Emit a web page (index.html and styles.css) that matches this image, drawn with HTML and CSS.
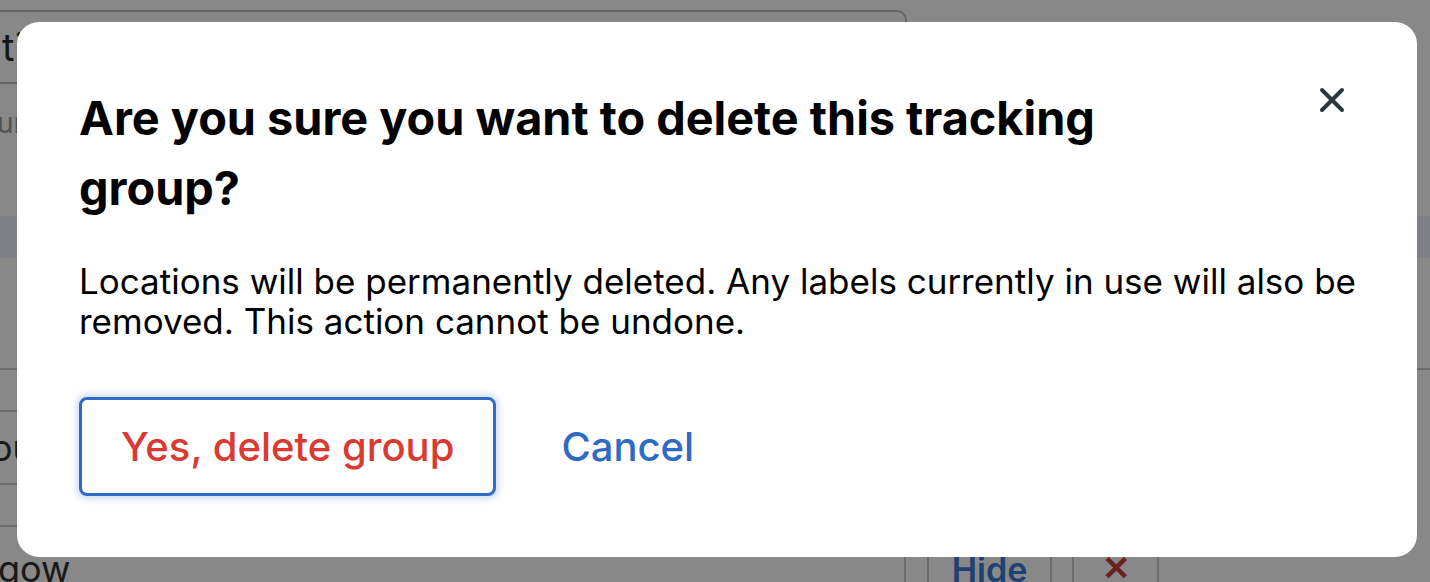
FILE: index.html
```html
<!DOCTYPE html>
<html lang="en">
<head>
<meta charset="utf-8">
<title>Delete tracking group</title>
<link rel="stylesheet" href="styles.css">
</head>
<body>
<div class="page">
  <div class="name-field"><span class="name-text">tions</span></div>
  <div class="sub-label">urrent stations</div>
  <div class="table">
    <div class="table-head"></div>
    <div class="row row-a"></div>
    <div class="row row-b"></div>
    <div class="row row-c"><span class="cell-text">ou</span></div>
    <div class="row row-d"></div>
    <div class="row row-e">
      <span class="cell-text city">gow</span>
      <span class="cell cell-gap"></span>
      <span class="cell cell-hide">Hide</span>
      <span class="cell cell-gap2"></span>
      <span class="cell cell-remove">✕</span>
    </div>
  </div>
</div>

<div class="overlay">
  <div class="modal" role="dialog" aria-modal="true">
    <div class="modal-header">
      <h2 class="modal-title">Are you sure you want to delete this tracking group?</h2>
      <button class="close-btn" aria-label="Close">
        <svg width="26" height="26" viewBox="0 0 26 26" aria-hidden="true">
          <path d="M3 3 L23 23 M23 3 L3 23" stroke="#2c383f" stroke-width="4" stroke-linecap="round" fill="none"/>
        </svg>
      </button>
    </div>
    <p class="modal-body">Locations will be permanently deleted. Any labels currently in use will also be removed. This action cannot be undone.</p>
    <div class="modal-actions">
      <button class="btn-danger">Yes, delete group</button>
      <button class="btn-link">Cancel</button>
    </div>
  </div>
</div>
</body>
</html>
```

FILE: styles.css
```css
* { box-sizing: border-box; }

html, body {
  margin: 0;
  padding: 0;
  width: 1430px;
  height: 582px;
  overflow: hidden;
  background: #ffffff;
  font-family: "Inter", "Liberation Sans", sans-serif;
}

/* ---------- background page (covered by overlay) ---------- */
.page {
  width: 1430px;
  height: 582px;
  padding-top: 10px;
  overflow: hidden;
}

.name-field {
  margin-left: -40px;
  width: 947px;
  height: 74px;
  border: 2px solid #bdbdbd;
  border-radius: 10px;
  display: flex;
  align-items: center;
  overflow: hidden;
}

.name-text {
  display: block;
  margin-left: 40px;
  font-size: 38px;
  color: #2a2a2a;
  white-space: nowrap;
}

.sub-label {
  margin-top: 22px;
  margin-left: -3px;
  font-size: 28px;
  color: #9a9a9a;
  white-space: nowrap;
}

.table {
  margin-top: 76px;
  width: 1430px;
}

.table-head {
  height: 42px;
  background: #ebf1f9;
}

.row {
  border-bottom: 2px solid #c8c8c8;
  display: flex;
  align-items: center;
}

.row-a { height: 112px; }
.row-b { height: 42px; width: 1161px; }
.row-c { height: 73px; width: 1161px; }
.row-d { height: 42px; width: 1161px; }
.row-e { height: 60px; border-bottom: none; align-items: flex-start; }

.cell-text {
  font-size: 36px;
  color: #303030;
  margin-left: -9px;
}

.city {
  margin-left: -2px;
  margin-top: 20px;
  width: 906px;
}

.cell {
  height: 60px;
  border-left: 2px solid #c8c8c8;
}

.cell-gap { width: 23px; }
.cell-gap2 { width: 22px; }

.cell-hide {
  width: 123px;
  font-size: 34px;
  font-weight: 600;
  color: #3a7bd4;
  padding-top: 22px;
  text-align: center;
}

.cell-remove {
  width: 87px;
  border-right: 2px solid #c8c8c8;
  color: #c83b3b;
  font-size: 34px;
  font-weight: 700;
  padding-top: 20px;
  text-align: center;
}

/* ---------- overlay + modal ---------- */
.overlay {
  position: fixed;
  inset: 0;
  background: rgba(0, 0, 0, 0.465);
  display: flex;
  align-items: flex-start;
  justify-content: flex-start;
  padding: 22px 0 0 17px;
}

.modal {
  width: 1400px;
  height: 535px;
  background: #ffffff;
  border-radius: 22px;
  padding: 61px 36px 61px 62px;
  display: flex;
  flex-direction: column;
}

.modal-header {
  display: flex;
  align-items: flex-start;
  justify-content: space-between;
}

.modal-title {
  margin: 0;
  max-width: 1120px;
  font-size: 46.8px;
  font-weight: 700;
  line-height: 70px;
  color: #000000;
}

.close-btn {
  width: 46px;
  height: 46px;
  margin-top: -6px;
  margin-right: 26px;
  border: none;
  background: transparent;
  padding: 0;
  display: flex;
  align-items: center;
  justify-content: center;
  cursor: pointer;
}

.modal-body {
  margin: 38px 0 0 0;
  font-size: 35px;
  line-height: 40px;
  color: #000000;
}

.modal-actions {
  margin-top: 56px;
  display: flex;
  align-items: center;
  gap: 65px;
}

.btn-danger {
  height: 99px;
  padding: 0 39px;
  background: #ffffff;
  border: 3px solid #2f6bc4;
  border-radius: 8px;
  box-shadow: 0 0 6px 3px rgba(47, 107, 196, 0.22);
  color: #d93a31;
  font-family: inherit;
  font-size: 40px;
  font-weight: 500;
  cursor: pointer;
}

.btn-link {
  padding: 0;
  border: none;
  background: transparent;
  color: #2f6bc4;
  font-family: inherit;
  font-size: 40px;
  font-weight: 500;
  cursor: pointer;
}
```
